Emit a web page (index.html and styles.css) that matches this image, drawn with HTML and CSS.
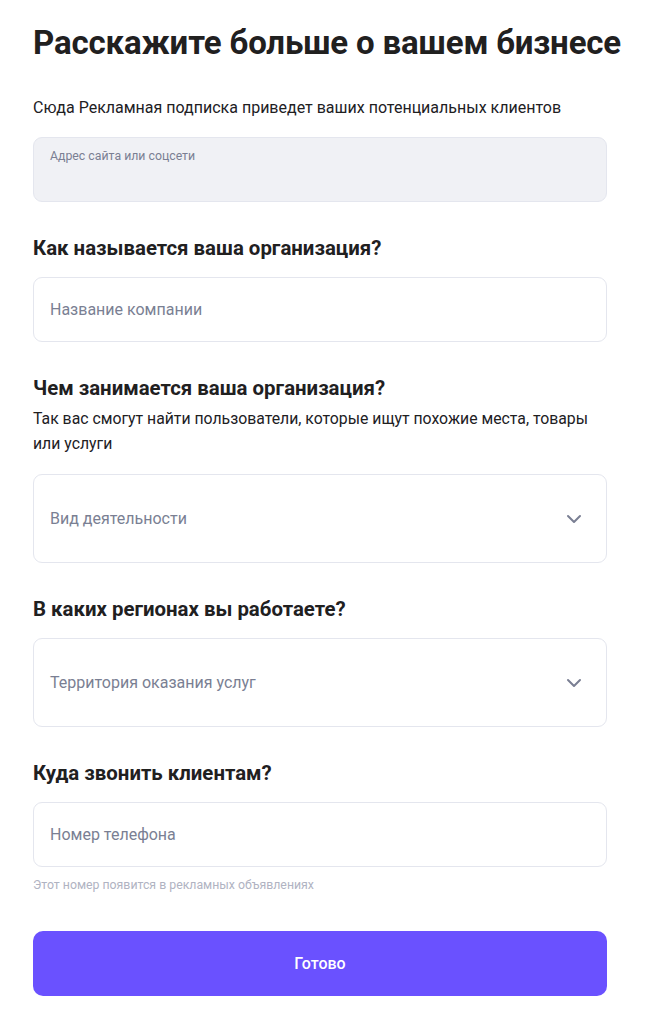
FILE: index.html
```html
<!DOCTYPE html>
<html lang="ru">
<head>
<meta charset="utf-8">
<link rel="stylesheet" href="styles.css">
</head>
<body>
<main class="page">
  <h1 class="title">Расскажите больше о вашем бизнесе</h1>
  <p class="lead">Сюда Рекламная подписка приведет ваших потенциальных клиентов</p>
  <div class="field field-filled">
    <span class="field-label">Адрес сайта или соцсети</span>
  </div>

  <h2 class="q">Как называется ваша организация?</h2>
  <div class="field"><span class="ph">Название компании</span></div>

  <h2 class="q">Чем занимается ваша организация?</h2>
  <p class="hint">Так вас смогут найти пользователи, которые ищут похожие места, товары или услуги</p>
  <div class="field select"><span class="ph">Вид деятельности</span>
    <svg class="chev" width="16" height="10" viewBox="0 0 16 10"><path d="M2 2l6 6 6-6" fill="none" stroke="#7a7f93" stroke-width="2" stroke-linecap="round" stroke-linejoin="round"/></svg>
  </div>

  <h2 class="q">В каких регионах вы работаете?</h2>
  <div class="field select"><span class="ph">Территория оказания услуг</span>
    <svg class="chev" width="16" height="10" viewBox="0 0 16 10"><path d="M2 2l6 6 6-6" fill="none" stroke="#7a7f93" stroke-width="2" stroke-linecap="round" stroke-linejoin="round"/></svg>
  </div>

  <h2 class="q">Куда звонить клиентам?</h2>
  <div class="field"><span class="ph">Номер телефона</span></div>
  <p class="note">Этот номер появится в рекламных объявлениях</p>

  <button class="btn">Готово</button>
</main>
</body>
</html>
```

FILE: styles.css
```css
* { box-sizing: border-box; }
html, body { margin: 0; padding: 0; background: #fff; }
body {
  font-family: Roboto, "Noto Sans", sans-serif;
  color: #21201f;
}
.page {
  width: 574px;
  margin-left: 33px;
  padding-top: 23px;
  display: flex;
  flex-direction: column;
}
.title {
  margin: 0;
  font-size: 33px;
  line-height: 40px;
  font-weight: 700;
  white-space: nowrap;
  letter-spacing: -0.15px;
}
.lead {
  margin: 34px 0 0;
  font-size: 16px;
  line-height: 22px;
}
.field {
  height: 65px;
  border: 1px solid #e4e6ee;
  border-radius: 9px;
  background: #fff;
  display: flex;
  align-items: center;
  padding: 0 16px;
  position: relative;
  margin-top: 18px;
}
.field-filled {
  background: #f0f1f5;
  align-items: flex-start;
  padding-top: 10px;
}
.field-label {
  font-size: 12.3px;
  line-height: 16px;
  color: #7a7f93;
}
.ph {
  font-size: 16px;
  color: #7a7f93;
}
.select {
  height: 89px;
  justify-content: space-between;
  padding-right: 24px;
}
.chev { display: block; }
.q {
  margin: 33px 0 0;
  font-size: 20.4px;
  line-height: 26px;
  font-weight: 700;
}
.q + .field { margin-top: 16px; }
.hint {
  margin: 5px 0 0;
  font-size: 15.8px;
  line-height: 25px;
}
.hint + .field { margin-top: 18px; }
.note {
  margin: 10px 0 0;
  font-size: 12.3px;
  line-height: 16px;
  color: #b0b3c2;
}
.btn {
  margin-top: 38px;
  height: 65px;
  border: 0;
  border-radius: 10px;
  background: #6a51ff;
  color: #fff;
  font-family: inherit;
  font-size: 16px;
  font-weight: 500;
}
```
